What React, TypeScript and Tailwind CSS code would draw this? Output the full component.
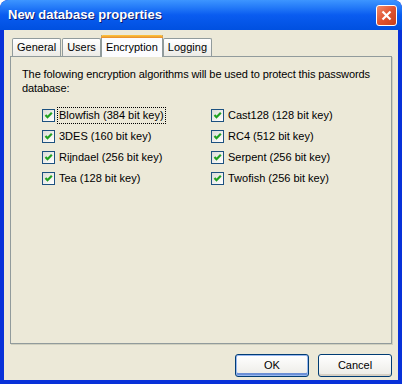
import React from "react";

const algos: [string, string][] = [
  ["Blowfish (384 bit key)", "Cast128 (128 bit key)"],
  ["3DES (160 bit key)", "RC4 (512 bit key)"],
  ["Rijndael (256 bit key)", "Serpent (256 bit key)"],
  ["Tea (128 bit key)", "Twofish (256 bit key)"],
];

const CheckBox = ({ label, focused }: { label: string; focused?: boolean }) => (
  <div className="flex items-center h-[13px]">
    <div className="w-[13px] h-[13px] border border-[#1c5180] bg-gradient-to-br from-[#dcdcd7] to-white flex items-center justify-center shrink-0">
      <svg width="11" height="11" viewBox="0 0 11 11">
        <path d="M2.5 5 L4.5 7.2 L8.8 2.8" fill="none" stroke="#21a121" strokeWidth="2.2" />
      </svg>
    </div>
    <span
      className={
        "ml-[2px] px-[1px] leading-[15px] " +
        (focused ? "border border-dotted border-black" : "border border-transparent")
      }
    >
      {label}
    </span>
  </div>
);

const Tab = ({ label, active }: { label: string; active?: boolean }) =>
  active ? (
    <div className="relative z-10 -mb-[1px] -mx-[1px] h-[22px] px-[4px] bg-[#fcfcfe] border-x border-[#919b9c] flex flex-col">
      <div className="-mx-[5px] h-[3px] bg-gradient-to-b from-[#ffc83c] to-[#e68b2c] rounded-t-[2px]" />
      <div className="flex-1 flex items-center justify-center">{label}</div>
    </div>
  ) : (
    <div className="h-[18px] px-[4px] bg-gradient-to-b from-white to-[#ecebe6] border border-b-0 border-[#919b9c] rounded-t-[2px] flex items-center">
      {label}
    </div>
  );

export default function App() {
  return (
    <div
      className="w-[402px] h-[384px] bg-[#0831d9] rounded-t-[8px] flex flex-col overflow-hidden text-[11px] text-black"
      style={{ fontFamily: '"Liberation Sans", Arial, sans-serif' }}
    >
      <div className="h-[30px] shrink-0 bg-gradient-to-b from-[#3d95ff] via-[#0a5cf0] to-[#0050e0] flex items-center pl-[8px] pr-[5px] rounded-t-[8px]">
        <span className="flex-1 text-white font-bold text-[13px] [text-shadow:1px_1px_0_#0a1a6e]">
          New database properties
        </span>
        <div className="w-[21px] h-[21px] rounded-[3px] border border-white bg-gradient-to-br from-[#f08a6a] via-[#e0532f] to-[#c8401c] flex items-center justify-center">
          <svg width="11" height="11" viewBox="0 0 11 11">
            <path d="M1.5 1.5 L9.5 9.5 M9.5 1.5 L1.5 9.5" stroke="white" strokeWidth="2.2" />
          </svg>
        </div>
      </div>
      <div className="flex-1 mx-[4px] mb-[4px] bg-[#ece9d8] flex flex-col px-[6px] pt-[5px]">
        <div className="flex items-end pl-[2px] gap-[1px]">
          <Tab label="General" />
          <Tab label="Users" />
          <Tab label="Encryption" active />
          <Tab label="Logging" />
        </div>
        <div className="h-[288px] border border-[#919b9c] shadow-[1px_1px_0_#d0d0bf] px-[11px] pt-[10px]">
          <p className="leading-[14px] tracking-[-0.1px]">
            The folowing encryption algorithms will be used to protect this passwords database:
          </p>
          <div className="grid grid-cols-2 pl-[20px] pt-[14px] gap-y-[8px]">
            {algos.map(([a, b], i) => (
              <React.Fragment key={a}>
                <CheckBox label={a} focused={i === 0} />
                <CheckBox label={b} />
              </React.Fragment>
            ))}
          </div>
        </div>
        <div className="flex justify-end gap-[9px] pt-[10px]">
          <button className="w-[74px] h-[23px] rounded-[3px] border border-[#003c74] bg-gradient-to-b from-white to-[#ecebe6] shadow-[inset_0_0_0_1px_#98b8f0,inset_0_-2px_0_1px_#6b8fd6]">
            OK
          </button>
          <button className="w-[74px] h-[23px] rounded-[3px] border border-[#003c74] bg-gradient-to-b from-white to-[#ecebe6] shadow-[inset_0_-2px_0_#d6d0c5]">
            Cancel
          </button>
        </div>
      </div>
    </div>
  );
}
